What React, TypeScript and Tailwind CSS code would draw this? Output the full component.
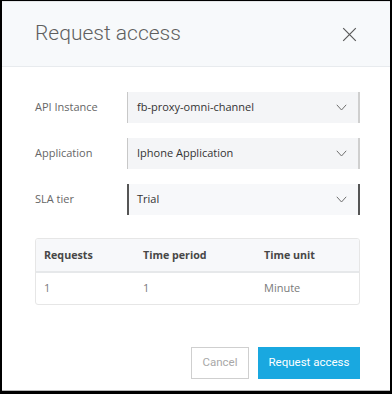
import React from 'react';

const fields = [
  { label: 'API Instance', value: 'fb-proxy-omni-channel', active: false },
  { label: 'Application', value: 'Iphone Application', active: false },
  { label: 'SLA tier', value: 'Trial', active: true },
];

function Chevron() {
  return (
    <svg width="11" height="7" viewBox="0 0 11 7" fill="none">
      <path d="M0.8 0.8L5.5 6L10.2 0.8" stroke="#6e6e6e" strokeWidth="1" />
    </svg>
  );
}

export default function App() {
  return (
    <div className="w-[392px] h-[394px] bg-black pt-[1px] pl-[2px] pr-[2px] pb-[3px]">
      <div
        className="h-full bg-white flex flex-col border-b border-[#b8b8b8]"
        style={{ fontFamily: '"Open Sans", "Liberation Sans", sans-serif' }}
      >
        <div className="h-[66px] shrink-0 bg-[#f7f9fb] border-t border-[#e4e6e8] border-b border-b-[#e8ebee] flex items-center justify-between pl-[33px] pr-[33px]">
          <h1
            className="text-[21px] font-light text-[#5f5f5f]"
            style={{ fontFamily: 'Roboto, "Liberation Sans", sans-serif' }}
          >
            Request access
          </h1>
          <svg width="15" height="15" viewBox="0 0 15 15" fill="none">
            <path d="M1.2 1.2L13.8 13.8M13.8 1.2L1.2 13.8" stroke="#5a5a5a" strokeWidth="1.2" />
          </svg>
        </div>

        <div className="flex-1 flex flex-col pl-[33px] pr-[30px] pt-[25px]">
          <div className="flex flex-col gap-[15px]">
            {fields.map(f => (
              <div key={f.label} className="flex items-center">
                <span className="w-[92px] text-[11px] text-[#666]">{f.label}</span>
                <div
                  className={
                    f.active
                      ? 'flex-1 h-[31px] bg-[#f7f8fa] border-l-2 border-r-2 border-[#555] flex items-center justify-between pl-[8px] pr-[11px]'
                      : 'flex-1 h-[31px] bg-[#f4f5f7] border-l border-r-2 border-l-[#c8c8c8] border-r-[#cfcfcf] flex items-center justify-between pl-[9px] pr-[11px]'
                  }
                >
                  <span className="text-[11px] text-[#333]">{f.value}</span>
                  <Chevron />
                </div>
              </div>
            ))}
          </div>

          <div className="mt-[23px] border border-[#e6e6e6] rounded-[3px] overflow-hidden">
            <div className="h-[34px] bg-[#f7f8fa] border-b-2 border-[#e6e8ea] flex items-center text-[10.7px] font-bold text-[#474747]">
              <span className="w-[107px] pl-[8px]">Requests</span>
              <span className="w-[121px]">Time period</span>
              <span>Time unit</span>
            </div>
            <div className="h-[31px] flex items-center text-[11px] text-[#7a7a7a]">
              <span className="w-[107px] pl-[8px]">1</span>
              <span className="w-[121px]">1</span>
              <span>Minute</span>
            </div>
          </div>

          <div
            className="mt-auto mb-[11px] flex justify-end gap-[9px]"
            style={{ fontFamily: 'Roboto, "Liberation Sans", sans-serif' }}
          >
            <button className="h-[32px] w-[58px] border border-[#cfcfcf] bg-white text-[11.5px] text-[#a8a8a8]">
              Cancel
            </button>
            <button className="h-[32px] w-[102px] bg-[#19a8e0] text-[11.5px] text-white">
              Request access
            </button>
          </div>
        </div>
      </div>
    </div>
  );
}
